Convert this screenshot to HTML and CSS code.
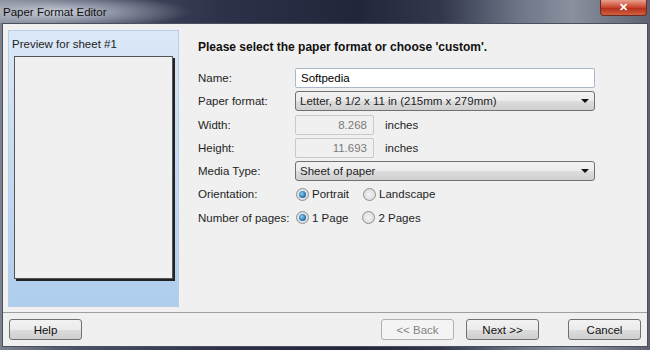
FILE: index.html
```html
<!DOCTYPE html>
<html lang="en">
<head>
  <meta charset="UTF-8" />
  <title>Paper Format Editor</title>
  <link rel="stylesheet" href="styles.css">
</head>
<body>
  <div class="window">
    <div class="titlebar">
      <span class="title">Paper Format Editor</span>
      <span class="close">&#x2715;</span>
    </div>

    <div class="client">
      <div class="main">
        <div class="preview">
          <div class="preview-label">Preview for sheet #1</div>
          <div class="sheet"></div>
        </div>

        <div class="form">
          <h1>Please select the paper format or choose 'custom'.</h1>
          <div class="rows">
            <label>Name:</label>
            <div><input class="text wide" type="text" value="Softpedia"></div>

            <label>Paper format:</label>
            <div class="select">Letter, 8 1/2 x 11 in (215mm x 279mm)<span class="arrow"></span></div>

            <label>Width:</label>
            <div class="unit"><span class="num">8.268</span>inches</div>

            <label>Height:</label>
            <div class="unit"><span class="num">11.693</span>inches</div>

            <label>Media Type:</label>
            <div class="select">Sheet of paper<span class="arrow"></span></div>

            <label>Orientation:</label>
            <div class="radios">
              <span class="radio on"></span><span class="opt">Portrait</span>
              <span class="radio"></span><span class="opt">Landscape</span>
            </div>

            <label>Number of pages:</label>
            <div class="radios">
              <span class="radio on"></span><span class="opt">1 Page</span>
              <span class="radio"></span><span class="opt">2 Pages</span>
            </div>
          </div>
        </div>
      </div>

      <div class="footer">
        <button>Help</button>
        <div class="spacer"></div>
        <button class="disabled">&lt;&lt; Back</button>
        <button class="next">Next &gt;&gt;</button>
        <button class="cancel">Cancel</button>
      </div>
    </div>
  </div>
</body>
</html>
```

FILE: styles.css
```css
html, body {
  margin: 0;
  width: 650px;
  height: 350px;
  overflow: hidden;
}
body {
  font-family: "Liberation Sans", Arial, sans-serif;
  font-size: 11.5px;
  color: #1e1e1e;
  background: #3a3f52;
}
.window {
  width: 650px;
  height: 350px;
  display: flex;
  flex-direction: column;
  background: linear-gradient(90deg, #7c8290 0%, #4a5066 12%, #2c3149 35%, #22263a 55%, #33384d 68%, #6d7687 80%, #8a909e 88%, #5d6170 100%);
}
.titlebar {
  height: 23px;
  display: flex;
  align-items: center;
  position: relative;
  background: radial-gradient(ellipse 130px 18px at 60px 12px, rgba(220,225,235,0.85), rgba(220,225,235,0) 100%);
}
.title {
  margin-left: 3px;
  font-size: 11.5px;
  color: #111;
}
.close {
  position: absolute;
  right: 3px;
  top: 0;
  width: 45px;
  height: 15px;
  border: 1px solid #6b2a22;
  border-top: none;
  border-radius: 0 0 4px 4px;
  background: linear-gradient(#e8a18f, #c9432c 50%, #b5301c 55%, #d0603f);
  color: #fff;
  font-size: 11px;
  font-weight: bold;
  text-align: center;
  line-height: 14px;
}
.client {
  flex: 1;
  margin: 0 2px 3px 2px;
  border: 1px solid #4a4f5c;
  background: #f0f0f0;
  display: flex;
  flex-direction: column;
}
.main {
  display: flex;
  padding: 6px 0 0 5px;
  border-bottom: 1px solid #a0a0a0;
}
.preview {
  box-sizing: border-box;
  width: 171px;
  height: 277px;
  border: 1px solid #b9cee6;
  background: linear-gradient(#dbe8f7, #aecdec);
  padding: 0 5px;
  margin-bottom: 5px;
}
.preview-label {
  padding-top: 6px;
  margin-left: -2px;
  height: 19px;
  line-height: 14px;
}
.sheet {
  width: 157px;
  height: 221px;
  border: 1px solid #555;
  background: #f0f0f0;
  box-shadow: 2px 2px 0 #222;
}
.form {
  padding-left: 19px;
  flex: 1;
}
h1 {
  margin: 10px 0 0 0;
  font-size: 12px;
  line-height: 14px;
  font-weight: bold;
  color: #111;
}
.rows {
  margin-top: 14px;
  display: grid;
  grid-template-columns: 97px 300px;
  row-gap: 3.3px;
  align-items: center;
}
.text {
  box-sizing: border-box;
  height: 20px;
  border: 1px solid #abb8ca;
  border-radius: 2px;
  font: inherit;
  padding: 0 5px;
  background: #fff;
}
.wide {
  width: 300px;
  display: block;
}
.select {
  box-sizing: border-box;
  height: 20px;
  line-height: 18px;
  border: 1px solid #707070;
  border-radius: 3px;
  padding: 0 4px;
  background: linear-gradient(#f2f2f2 0%, #ebebeb 50%, #dddddd 51%, #cfcfcf 100%);
  position: relative;
}
.arrow {
  position: absolute;
  right: 5px;
  top: 7px;
  border-left: 4px solid transparent;
  border-right: 4px solid transparent;
  border-top: 4px solid #111;
}
.unit {
  display: flex;
  align-items: center;
}
.num {
  box-sizing: border-box;
  width: 79px;
  height: 20px;
  line-height: 18px;
  border: 1px solid #c9c9c9;
  border-radius: 2px;
  text-align: right;
  padding-right: 6px;
  color: #7a7a7a;
  margin-right: 11px;
}
.radios {
  display: flex;
  align-items: center;
  height: 20px;
}
.radio {
  box-sizing: border-box;
  width: 13px;
  height: 13px;
  border-radius: 50%;
  border: 1px solid #8e8f8f;
  background: radial-gradient(circle at 50% 50%, #f4f4f4, #d5d5d5);
  margin: 0 3px 0 1px;
  position: relative;
}
.radio.on::after {
  content: "";
  position: absolute;
  left: 2px;
  top: 2px;
  width: 7px;
  height: 7px;
  border-radius: 50%;
  background: radial-gradient(circle at 40% 40%, #8ad1f5, #1b6aa3 70%, #0c3d66);
}
.opt {
  margin-right: 13px;
}
.footer {
  flex: 1;
  display: flex;
  align-items: center;
  padding: 0 6px;
}
.spacer {
  flex: 1;
}
button {
  box-sizing: border-box;
  width: 73px;
  height: 21px;
  border: 1px solid #707070;
  border-radius: 3px;
  background: linear-gradient(#f2f2f2 0%, #ebebeb 50%, #dddddd 51%, #cfcfcf 100%);
  font: inherit;
  color: #111;
  padding: 0;
}
button.disabled {
  border-color: #adb2b5;
  background: #f4f4f4;
  color: #838383;
}
button.next {
  margin-left: 12px;
}
button.cancel {
  margin-left: 29px;
}
```
